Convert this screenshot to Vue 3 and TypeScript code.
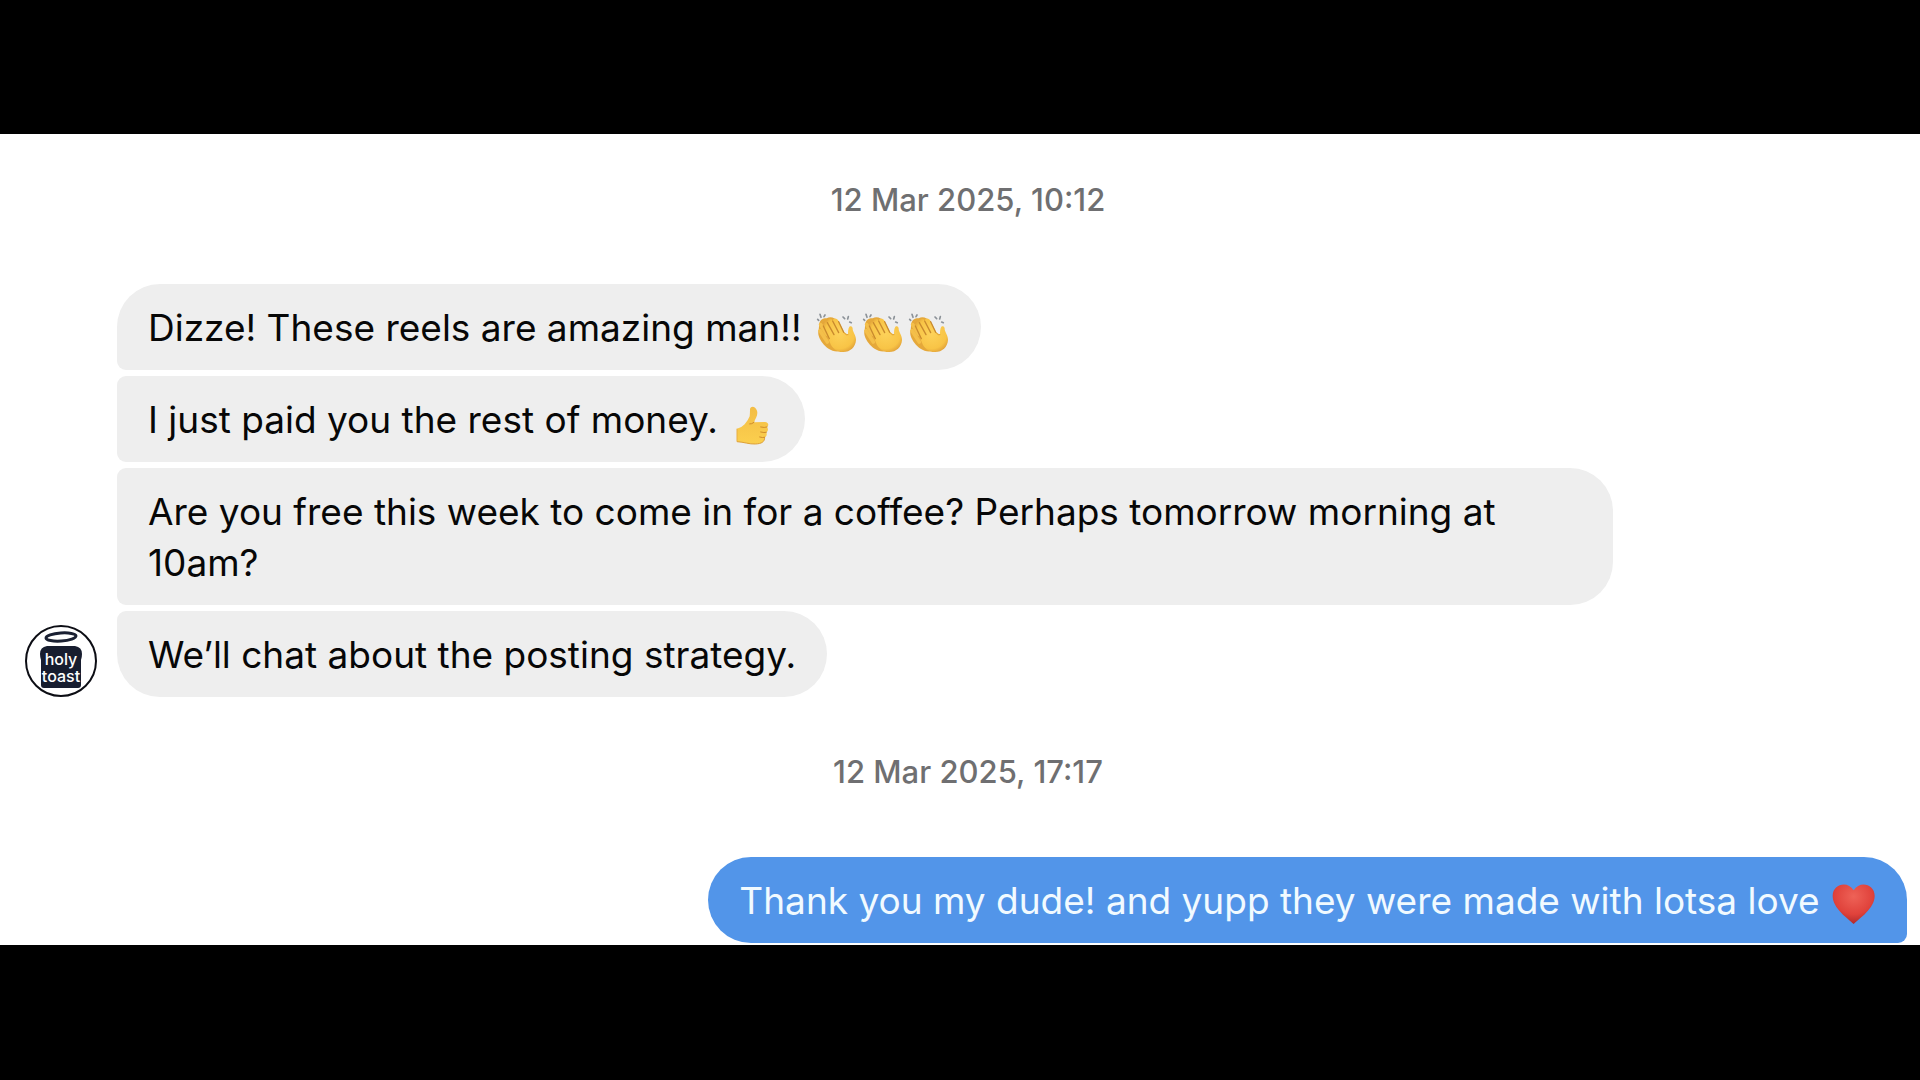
<script setup lang="ts">
type Emoji = 'clap' | 'thumb' | 'heart'

interface Message {
  text: string
  emojis: Emoji[]
}

const labels: Record<Emoji, string> = {
  clap: 'clapping hands',
  thumb: 'thumbs up',
  heart: 'red heart',
}

const received: Message[] = [
  { text: 'Dizze! These reels are amazing man!!', emojis: ['clap', 'clap', 'clap'] },
  { text: 'I just paid you the rest of money.', emojis: ['thumb'] },
  { text: 'Are you free this week to come in for a coffee? Perhaps tomorrow morning at 10am?', emojis: [] },
  { text: 'We’ll chat about the posting strategy.', emojis: [] },
]

const sent: Message[] = [
  { text: 'Thank you my dude! and yupp they were made with lotsa love', emojis: ['heart'] },
]
</script>

<template>
  <svg class="defs" width="0" height="0" aria-hidden="true">
    <defs>
      <linearGradient id="skin" x1="0" y1="0" x2="0" y2="1">
        <stop offset="0" stop-color="#f3bd45" />
        <stop offset="1" stop-color="#fbcf4e" />
      </linearGradient>
      <radialGradient id="palm" cx="0.5" cy="0.45" r="0.6">
        <stop offset="0" stop-color="#fdd25a" />
        <stop offset="0.75" stop-color="#f8c446" />
        <stop offset="1" stop-color="#e0a038" />
      </radialGradient>
      <radialGradient id="red" cx="0.5" cy="0.3" r="0.7">
        <stop offset="0" stop-color="#ee6257" />
        <stop offset="0.65" stop-color="#e0423b" />
        <stop offset="1" stop-color="#b02a2b" />
      </radialGradient>
      <symbol id="clap" viewBox="0 0 138 138">
        <path d="M22 40C24 30 34 24 44 25C56 18 70 24 78 34L92 60L80 124C58 126 42 112 31 98C22 86 16 72 20 60Z" fill="#e5a83a" />
        <path d="M26 44L44 72M24 62L46 96" stroke="#f4bf4a" stroke-width="11" stroke-linecap="round" />
        <path d="M34 46C30 36 40 31 46 37C44 26 57 22 62 32C64 23 76 24 80 34L96 66L108 74C108 66 108 56 112 50C118 46 123 51 122 58C123 67 132 76 132 90C131 112 113 127 92 126C74 126 60 114 54 98Z" fill="url(#palm)" />
        <path d="M46 38L66 74M62 33L80 68M80 35L95 67M34 48L52 86" fill="none" stroke="#c98a2e" stroke-width="4" stroke-linecap="round" />
        <path d="M96 68Q103 77 109 74" fill="none" stroke="#dc9d32" stroke-width="3" />
        <path d="M17 28L20 31M24 13L27 22M39 15L36 20M93 21L98 26M109 20L107 27M113 36L118 38" stroke="#8c9298" stroke-width="5" stroke-linecap="round" />
      </symbol>
      <symbol id="thumb" viewBox="0 0 138 138">
        <path d="M27 80Q40 78 50 67Q60 56 65 43Q66 35 66 21C69 10 82 12 87 26C91 40 82 50 78 61L111 60C121 60 124 71 117 75C122 81 120 88 115 91C118 98 115 104 110 106C110 120 101 125 82 126C63 127 48 120 27 119Z" fill="url(#skin)" />
        <path d="M27 119C48 120 63 127 82 126C101 125 110 120 110 106" fill="none" stroke="#dda039" stroke-width="3" />
        <path d="M98 75Q110 78 117 75M98 90Q109 93 115 91M95 105Q104 108 110 106M78 61Q71 67 65 66" fill="none" stroke="#cf8b2a" stroke-width="3" stroke-linecap="round" />
        <path d="M27 80V119" stroke="#e8ae42" stroke-width="3" />
      </symbol>
      <symbol id="heart" viewBox="-2 10 138 138">
        <path d="M69 133C52 117 6 86 6 49C6 13 51 2 69 32C87 2 132 13 132 49C132 86 86 117 69 133Z" fill="url(#red)" />
      </symbol>
    </defs>
  </svg>

  <main class="stage">
    <section class="chat">
      <time class="stamp" datetime="2025-03-12T10:12">12 Mar 2025, 10:12</time>

      <div class="incoming">
        <svg class="avatar" viewBox="0 0 72 72" role="img" aria-label="holy toast">
          <circle cx="36" cy="36" r="35" fill="#fff" stroke="#0c0d14" stroke-width="2" />
          <ellipse cx="36" cy="12" rx="15" ry="4" fill="none" stroke="#1a2032" stroke-width="3" transform="rotate(-4 36 12)" />
          <path d="M22 21H50Q57 22 57 29Q57 32 56 35V60Q56 63 53 63H19Q16 63 16 60V35Q15 32 15 29Q15 22 22 21Z" fill="#171d2f" />
          <text x="36" y="40" class="logo">holy</text>
          <text x="36" y="57" class="logo">toast</text>
        </svg>
        <ul class="stack">
          <li v-for="message in received" :key="message.text" class="bubble">
            {{ message.text }}
            <span v-if="message.emojis.length" class="emojis">
              <svg v-for="(emoji, i) in message.emojis" :key="i" class="emoji" role="img" :aria-label="labels[emoji]">
                <use :href="`#${emoji}`" />
              </svg>
            </span>
          </li>
        </ul>
      </div>

      <time class="stamp" datetime="2025-03-12T17:17">12 Mar 2025, 17:17</time>

      <ul class="stack outgoing">
        <li v-for="message in sent" :key="message.text" class="bubble own">
          {{ message.text }}
          <span v-if="message.emojis.length" class="emojis">
            <svg v-for="(emoji, i) in message.emojis" :key="i" class="emoji" role="img" :aria-label="labels[emoji]">
              <use :href="`#${emoji}`" />
            </svg>
          </span>
        </li>
      </ul>
    </section>
  </main>
</template>

<style>
body {
  margin: 0;
  background: #000;
}
</style>

<style scoped>
.defs {
  position: absolute;
}

.stage {
  padding: 134px 0;
  background: #000;
  font-family: Inter, "Liberation Sans", sans-serif;
}

.chat {
  display: flex;
  flex-direction: column;
  padding: 48px 0 2px;
  background: #fff;
}

.stamp {
  padding-left: 16px;
  text-align: center;
  font-size: 31px;
  font-weight: 500;
  line-height: 36px;
  color: #6f6f71;
}

.incoming {
  display: flex;
  align-items: flex-end;
  gap: 20px;
  margin: 66px 16% 57px 25px;
}

.avatar {
  flex: none;
  width: 72px;
  height: 72px;
}

.logo {
  font-size: 16px;
  font-weight: 500;
  text-anchor: middle;
  fill: #fff;
}

.stack {
  display: flex;
  flex: 1;
  flex-direction: column;
  align-items: flex-start;
  gap: 6px;
  min-width: 0;
  margin: 0;
  padding: 0;
  list-style: none;
}

.outgoing {
  align-items: flex-end;
  margin: 67px 13px 0 25px;
}

.bubble {
  padding: 18px 31px 17px;
  border-radius: 9px 43px 43px 9px;
  background: #eee;
  font-size: 37px;
  line-height: 51px;
  color: #070707;
}

.bubble:first-child {
  border-top-left-radius: 43px;
}

.bubble:last-child {
  border-bottom-left-radius: 43px;
}

.bubble.own {
  border-radius: 43px 43px 9px 43px;
  background: #5295e9;
  color: #f1faff;
}

.emojis {
  display: inline-flex;
  margin: -5px 0;
  vertical-align: -15px;
}

.emoji {
  width: 46px;
  height: 46px;
}
</style>
